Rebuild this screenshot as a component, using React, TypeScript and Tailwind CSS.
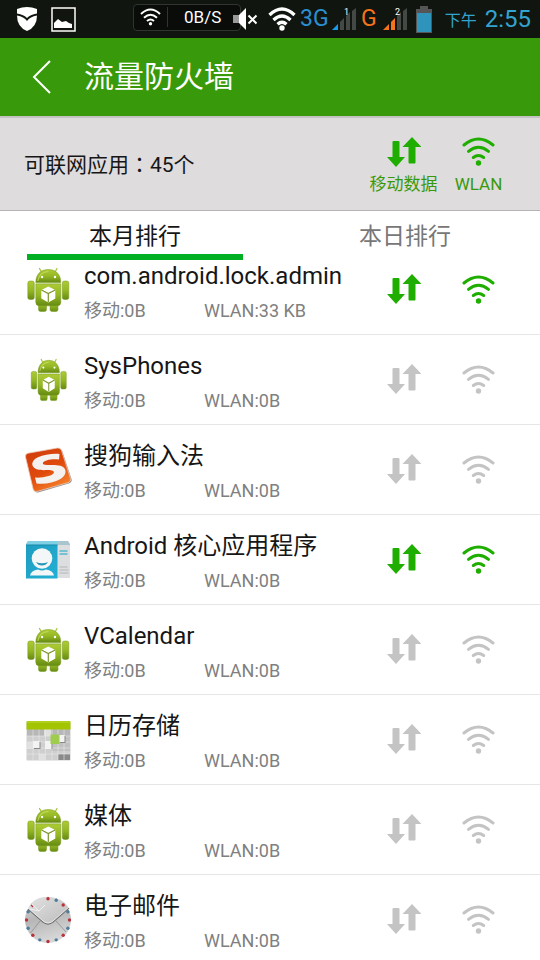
import { useState } from "react";
import clsx from "clsx";

type IconName = "android" | "androidSmall" | "sogou" | "contacts" | "calendar" | "mail";
type AppRow = { name: string; icon: IconName; mobile: string; wlan: string; allowed: boolean };

const APPS: AppRow[] = [
  { name: "com.android.lock.admin", icon: "android", mobile: "0B", wlan: "33 KB", allowed: true },
  { name: "SysPhones", icon: "androidSmall", mobile: "0B", wlan: "0B", allowed: false },
  { name: "搜狗输入法", icon: "sogou", mobile: "0B", wlan: "0B", allowed: false },
  { name: "Android 核心应用程序", icon: "contacts", mobile: "0B", wlan: "0B", allowed: true },
  { name: "VCalendar", icon: "android", mobile: "0B", wlan: "0B", allowed: false },
  { name: "日历存储", icon: "calendar", mobile: "0B", wlan: "0B", allowed: false },
  { name: "媒体", icon: "android", mobile: "0B", wlan: "0B", allowed: false },
  { name: "电子邮件", icon: "mail", mobile: "0B", wlan: "0B", allowed: false },
];

function DataArrows() {
  return (
    <svg className="w-[34px] h-[31px]" viewBox="0 0 34 31" fill="currentColor" aria-hidden="true">
      <path d="M6.500 4h5q1 0 1 1v15H18L9 30 0 20h5.500V5q0-1 1-1z" />
      <path d="M25 0l9.500 10H28.500v15.500q0 1-1 1H22.500q-1 0-1-1V10H15.500z" />
    </svg>
  );
}

function WifiArcs() {
  return (
    <svg className="w-[33px] h-[30px]" viewBox="0 0 33 30" fill="none" stroke="currentColor" strokeWidth="3" strokeLinecap="round" aria-hidden="true">
      <path d="M2 8Q16.500-4 31 8" />
      <path d="M6.500 14.300q10-8.200 20 0" />
      <path d="M11.300 20.500q5.200-4 10.400 0" />
      <circle cx="16.500" cy="26" r="2.700" fill="currentColor" stroke="none" />
    </svg>
  );
}

function AndroidIcon({ small = false }: { small?: boolean }) {
  return (
    <svg className={small ? "w-[41px] h-[46px]" : "w-12 h-12"} viewBox="0 0 48 48" preserveAspectRatio="none" aria-hidden="true">
      <defs>
        <linearGradient id="droid" x1="0" y1="0" x2="0" y2="1">
          <stop offset="0" stopColor="#adcb35" />
          <stop offset="0.500" stopColor="#95b824" />
          <stop offset="1" stopColor="#658a12" />
        </linearGradient>
      </defs>
      <path d="M17.500 6l-2-3.500M31 6l2-3.500" stroke="#a3c334" strokeWidth="1.200" strokeLinecap="round" />
      <g fill="url(#droid)" stroke="#77981f" strokeWidth="0.500">
        <path d="M14.500 34H22.500v9.500q0 2-2 2h-4q-2 0-2-2zM26 34h8v9.500q0 2-2 2h-4q-2 0-2-2z" />
        <path d="M11.800 16.500C11.800 8 17 3.500 24.300 3.500S36.800 8 36.800 16.500z" />
        <path d="M11.800 17.800h25v18.500q0 3.500-3.500 3.500H15.300q-3.500 0-3.500-3.500z" />
        <rect x="3.800" y="15" width="6.500" height="18.500" rx="2" />
        <rect x="38.300" y="15" width="6.500" height="18.500" rx="2" />
      </g>
      <path d="M13.800 15q1.500-9 10.500-9.500" fill="none" stroke="#cfe36b" strokeWidth="1.200" opacity="0.700" />
      <circle cx="18" cy="11" r="1.200" fill="#fff" />
      <circle cx="31" cy="11" r="1.200" fill="#fff" />
      <path d="M24.300 20.500l7 3.500v8.500l-7 4-7-4V24z" fill="#fff" />
      <path d="M17.500 24l6.800 3.500 6.800-3.500M24.300 27.500v8.500" fill="none" stroke="#7b962b" strokeWidth="1.200" />
    </svg>
  );
}

function SogouIcon() {
  return (
    <svg className="w-12 h-12" viewBox="0 0 48 48" aria-hidden="true">
      <defs>
        <linearGradient id="sogou" x1="0" y1="0" x2="0.600" y2="1">
          <stop offset="0" stopColor="#cf3c0c" />
          <stop offset="0.600" stopColor="#e04a0c" />
          <stop offset="1" stopColor="#f5802a" />
        </linearGradient>
      </defs>
      <path d="M5 8l29-5.500q3-.5 4.200 2.500L47.500 33q.8 3-2 4.200L14 46.500q-3 .5-4-2.500z" fill="#8d8d8d" />
      <path d="M4 7.200L33.500 2q3-.5 4 2.500l9 28q.7 3-2 4L13 45.500q-3 .6-3.800-2.300L1.500 11q-.5-3 2.500-3.800z" fill="url(#sogou)" stroke="#efc9b6" strokeWidth="0.800" />
      <path d="M35.500 8C29 7.300 20 8.500 14 11.300 7 14.500 6.500 20.500 12 23c4.500 2 11.500.5 16 1.500 3.500 1 2 4-2.500 5.200C20 31.200 15 32 11 31.500l1.500 6c8.500 1 17.500-.8 24-4.500 7-4 6.500-11.200 0-13.200-5-1.500-11.500-.3-15.500-1.100-3.500-.8-2.500-3.200 1.500-4.300 4.500-1.200 8-1.300 12.500-.9z" fill="#f5f1ee" />
    </svg>
  );
}

function ContactsIcon() {
  return (
    <svg className="w-12 h-12" viewBox="0 0 48 48" aria-hidden="true">
      <defs>
        <linearGradient id="contactBg" x1="0" y1="0" x2="1" y2="1">
          <stop offset="0" stopColor="#1e9cc0" />
          <stop offset="1" stopColor="#22b0d4" />
        </linearGradient>
      </defs>
      <path d="M4 5h40l2 3v34H2V8z" fill="#a9c6cf" />
      <path d="M4 5h29v4H2z" fill="#7fd0e5" />
      <path d="M33 9h13v33H33z" fill="#dcdedf" />
      <path d="M2 9h31.500v33.500H2z" fill="url(#contactBg)" />
      <path d="M2 9h31.500" stroke="#1688a8" />
      <circle cx="18" cy="22.500" r="10.300" fill="#f4f7f8" />
      <path d="M12 26q6 2.500 12 0-2 3.500-6 3.500t-6-3.500z" fill="#2797b8" />
      <path d="M6 39.500q1-5 8-6 4 2 8 0 7 1 8 6z" fill="#f4f7f8" />
      <path d="M35.500 15h8M35.500 18h8" stroke="#55b8d2" strokeWidth="1.500" />
      <path d="M35.500 31h8M35.500 34h9M35.500 37h9" stroke="#b3b7b9" strokeWidth="1.200" />
    </svg>
  );
}

function CalendarIcon() {
  return (
    <svg className="w-12 h-12" viewBox="0 0 48 48" aria-hidden="true">
      <rect x="2.500" y="5" width="44" height="39.500" rx="1" fill="#cfcfcf" />
      <path d="M3 13h43v7H3z" fill="#b7b7b7" />
      <path d="M27 20h19v15H27z" fill="#c1c1c1" />
      <path d="M34 38h12v6H34z" fill="#8a8a8a" />
      <path d="M20 13h7v7h-7zM3 26h6v7H3zM15 38h6v6h-6z" fill="#e0e0e0" />
      <path d="M9 13v31M15 13v31M21.500 13v31M28 13v31M34 13v31M40 13v31M3 20h43M3 26h43M3 32h43M3 38h43" stroke="#e9e9e9" strokeWidth="0.600" />
      <path d="M2.500 6q0-1 1-1h42q1 0 1 1v7.500h-44z" fill="#a3c500" />
      <path d="M3 6h43" stroke="#bcd93a" />
      <path d="M10 26h6.500v7H10zM22 26h6.500v7H22zM36 20h5.500v7H36z" fill="#888" />
      <path d="M9 25h6.500v7H9zM21 25h6.500v8H21zM35 19h5.500v7H35z" fill="#f3f3f3" />
      <path d="M26.500 18.500h9v9.500h-9z" fill="#9fcc4f" />
    </svg>
  );
}

function MailIcon() {
  const dots = Array.from({ length: 16 }, (_, i) => {
    const a = (i * Math.PI) / 8;
    return { x: 24 + 21.500 * Math.sin(a), y: 24 - 21.500 * Math.cos(a), red: i % 2 === 0 };
  });
  return (
    <svg className="w-12 h-12" viewBox="0 0 48 48" aria-hidden="true">
      <defs>
        <linearGradient id="mailBg" x1="0" y1="0" x2="0.300" y2="1">
          <stop offset="0" stopColor="#dedede" />
          <stop offset="0.500" stopColor="#b6b6b6" />
          <stop offset="1" stopColor="#d6d6d6" />
        </linearGradient>
        <linearGradient id="mailFlap" x1="0" y1="0" x2="1" y2="1">
          <stop offset="0" stopColor="#e2e2e2" />
          <stop offset="1" stopColor="#bcbcbc" />
        </linearGradient>
      </defs>
      <circle cx="24" cy="24" r="23" fill="url(#mailBg)" />
      <path d="M16 25L6.500 37M32 25l10 11" stroke="#8d8d8d" strokeWidth="0.800" />
      {dots.map((d, i) => (
        <circle key={i} cx={d.x} cy={d.y} r="1.700" fill={d.red ? "#b8333d" : "#4d7d9c"} />
      ))}
      <path d="M4 13L19 26q5 4 10 0l16-14Q39 1.500 24 1T4 13z" fill="url(#mailFlap)" />
      <path d="M8 8l7 7 6-6M15 15l-9-2" stroke="#f5f5f5" strokeWidth="0.800" fill="none" />
      <path d="M4 13l15 13q5 4 10 0l16-14" stroke="#707070" strokeWidth="1.300" fill="none" />
      <path d="M4 12l15 13q5 4 10 0l16-14" stroke="#f7f7f7" strokeWidth="0.800" fill="none" />
      <circle cx="24" cy="2.800" r="1.700" fill="#b8333d" />
      <circle cx="32.200" cy="4.300" r="1.700" fill="#4d7d9c" />
      <circle cx="39.200" cy="9" r="1.700" fill="#b8333d" />
      <path d="M7 9l2 2" stroke="#b8333d" strokeWidth="1.300" />
    </svg>
  );
}

function AppIcon({ name }: { name: IconName }) {
  if (name === "sogou") return <SogouIcon />;
  if (name === "contacts") return <ContactsIcon />;
  if (name === "calendar") return <CalendarIcon />;
  if (name === "mail") return <MailIcon />;
  return <AndroidIcon small={name === "androidSmall"} />;
}

function Signal({ sim, bars, color }: { sim: string; bars: number; color: string }) {
  const all = ["M0 22l6-6v6z", "M8 22v-8l4-4v12z", "M14 22V8l4-4v18z", "M20 22V3l4-3v22z"];
  return (
    <svg className="w-6 h-[22px] shrink-0" viewBox="0 0 24 22" aria-hidden="true">
      {all.map((d, i) => <path key={d} d={d} fill={i < bars ? color : "#454945"} />)}
      <text x="12" y="7" fontSize="9" fill="#fff">{sim}</text>
    </svg>
  );
}

function StatusBar() {
  return (
    <div className="h-[38px] shrink-0 flex items-center bg-[#10150f] text-white pl-4 pr-[9px]">
      <svg className="w-[22px] h-[26px]" viewBox="0 0 22 26" fill="#fff" aria-hidden="true">
        <path d="M1 3Q11-1 21 3v4.500q-7 1-10 4.500Q8 8.500 1 7.500z" />
        <path d="M1 9.500q7 1 10 5.500 3-4.500 10-5.500 0 11.500-10 15.500Q1 21 1 9.500z" />
      </svg>
      <svg className="w-[25px] h-[25px] ml-[13px]" viewBox="0 0 25 25" aria-hidden="true">
        <rect x="1" y="1" width="23" height="23" fill="none" stroke="#fff" strokeWidth="1.500" />
        <path d="M3 21v-5l4-4 4 3 4-1 3 2 3 1v4z" fill="#fff" />
      </svg>
      <div className="ml-[57px] mb-1 w-[108px] h-[27px] shrink-0 flex items-center rounded-sm border border-[#303530] bg-[#090c09]">
        <svg className="w-[21px] h-[18px] mx-[6px]" viewBox="0 0 21 18" fill="none" stroke="#fff" strokeWidth="2" aria-hidden="true">
          <path d="M1 6q9.500-9 19 0M4 9.800q6.500-6 13 0M7 13q3.500-3 7 0" />
          <circle cx="10.500" cy="15.800" r="1.700" fill="#fff" stroke="none" />
        </svg>
        <span className="h-5 border-l border-[#303530] pl-[16px] text-[17px] leading-5">0B/S</span>
      </div>
      <svg className="w-[25px] h-6 -ml-[8px] shrink-0 relative" viewBox="0 0 25 24" aria-hidden="true">
        <path d="M0 8h7v8H0z" fill="#999" />
        <path d="M6 8l7-7v22l-7-7z" fill="#fff" />
        <path d="M15.500 8.500l8 8m0-8l-8 8" stroke="#fff" strokeWidth="2" />
      </svg>
      <svg className="w-7 h-6 ml-[10px] shrink-0" viewBox="0 0 28 24" fill="none" stroke="#fff" strokeWidth="3.300" aria-hidden="true">
        <path d="M1.500 8q12.500-12 25 0M5.500 13q8.500-8 17 0M9.500 17.300q4.500-4 9 0" />
        <circle cx="14" cy="21" r="2.700" fill="#fff" stroke="none" />
      </svg>
      <span className="ml-1 w-[32px] shrink-0 text-[23px] leading-6 text-[#2b8fd0]">3G</span>
      <Signal sim="1" bars={1} color="#189af0" />
      <span className="ml-[5px] w-[22px] text-[23px] leading-6 text-[#f5741b]">G</span>
      <Signal sim="2" bars={2} color="#f5741b" />
      <svg className="w-4 h-[27px] ml-[9px] shrink-0" viewBox="0 0 16 27" aria-hidden="true">
        <path d="M4 0h8v3h4v24H0V3h4z" fill="#555" />
        <path d="M1 7h14v19H1z" fill="#2f94bc" />
      </svg>
      <span className="ml-auto pt-1 text-base leading-6 text-[#33a3cf]">下午</span>
      <time className="ml-2 text-2xl leading-6 text-[#33a3cf]">2:55</time>
    </div>
  );
}

export default function App() {
  const [tab, setTab] = useState(0);
  const [mobile, setMobile] = useState(APPS.map((a) => a.allowed));
  const [wlan, setWlan] = useState(APPS.map((a) => a.allowed));

  function flip(list: boolean[], i: number) {
    return list.map((v, n) => (n === i ? !v : v));
  }

  return (
    <main className="h-screen flex flex-col overflow-hidden bg-white text-[#161616] font-[Roboto,'Noto_Sans_CJK_SC',sans-serif]">
      <StatusBar />

      <header className="h-[78px] shrink-0 flex items-center bg-[#389a0a] text-white pl-8">
        <button type="button" aria-label="返回" className="w-[52px] h-full">
          <svg className="w-5 h-[34px]" viewBox="0 0 20 34" fill="none" stroke="currentColor" strokeWidth="2" aria-hidden="true">
            <path d="M18 1L2 17l16 16" />
          </svg>
        </button>
        <h1 className="text-[30px] leading-10">流量防火墙</h1>
      </header>

      <section className="h-[95px] shrink-0 flex items-center border-t-2 border-t-[#c4c2c3] border-b border-b-[#b5b3b4] bg-[#dedcdd] pl-6 pr-6">
        <p className="flex-1 text-[21px] leading-8">
          可联网应用<span className="font-['Noto_Sans_CJK_TC',sans-serif]" lang="zh-TW">：</span>45个
        </p>
        <div className="w-[75px] pt-1 flex flex-col items-center gap-1 text-[#1fae00]">
          <span className="h-8 flex items-center"><DataArrows /></span>
          <span className="text-[17px] leading-6 text-[#389a0a] whitespace-nowrap">移动数据</span>
        </div>
        <div className="w-[75px] pt-1 flex flex-col items-center gap-1 text-[#1fae00]">
          <span className="h-8 flex items-center"><WifiArcs /></span>
          <span className="text-[17px] leading-6 text-[#389a0a]">WLAN</span>
        </div>
      </section>

      <nav className="h-[50px] shrink-0 grid grid-cols-2">
        {["本月排行", "本日排行"].map((label, i) => (
          <button key={label} type="button" onClick={() => setTab(i)} className="flex flex-col items-stretch px-[27px]">
            <span className={clsx("h-[43px] pt-[10px] text-[23px] leading-8", tab !== i && "text-[#777]")}>{label}</span>
            <span className={clsx("h-[6px]", tab === i && "bg-[#00b022]")} />
          </button>
        ))}
      </nav>

      {/* the first row slides a little under the tabs */}
      <ul className="flex-1 min-h-0 -mt-4 overflow-y-auto [scrollbar-width:none]">
        {APPS.map((app, i) => (
          <li key={app.name} className="h-[90px] flex items-center border-b border-[#e6e6e6] pl-6 pr-6">
            <div className="w-12 h-12 shrink-0 flex items-center justify-center"><AppIcon name={app.icon} /></div>
            <div className="flex-1 min-w-0 ml-3 pt-[6px]">
              <div className="text-2xl leading-9 whitespace-nowrap">{app.name}</div>
              <div className="flex text-lg leading-[34px] text-[#808080]">
                <span className="w-[120px]">移动:{app.mobile}</span>
                <span>WLAN:{app.wlan}</span>
              </div>
            </div>
            <button type="button" aria-label={`${app.name} 移动数据`} aria-pressed={mobile[i]} onClick={() => setMobile(flip(mobile, i))}
              className={clsx("w-[75px] h-full flex items-center justify-center", mobile[i] ? "text-[#1fae00]" : "text-[#c4c4c4]")}>
              <DataArrows />
            </button>
            <button type="button" aria-label={`${app.name} WLAN`} aria-pressed={wlan[i]} onClick={() => setWlan(flip(wlan, i))}
              className={clsx("w-[75px] h-full flex items-center justify-center", wlan[i] ? "text-[#1fae00]" : "text-[#c4c4c4]")}>
              <WifiArcs />
            </button>
          </li>
        ))}
      </ul>
    </main>
  );
}
